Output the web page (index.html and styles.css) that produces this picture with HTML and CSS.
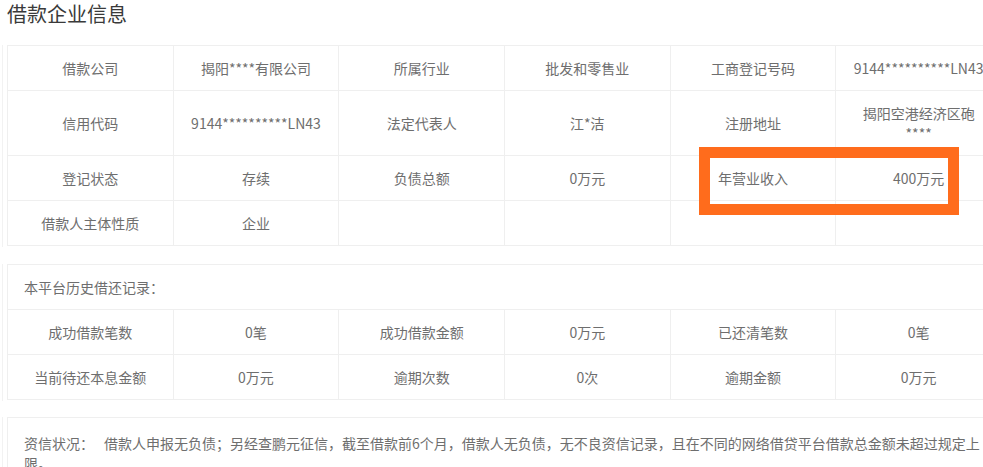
FILE: index.html
```html
<!DOCTYPE html>
<html lang="zh-CN">
<head>
<meta charset="utf-8">
<title>借款企业信息</title>
<link rel="stylesheet" href="styles.css">
</head>
<body>
<div class="page">
  <h2 class="title">借款企业信息</h2>

  <div class="panel">
    <table class="grid">
      <tr>
        <td>借款公司</td>
        <td>揭阳****有限公司</td>
        <td>所属行业</td>
        <td>批发和零售业</td>
        <td>工商登记号码</td>
        <td>9144**********LN43</td>
      </tr>
      <tr>
        <td>信用代码</td>
        <td>9144**********LN43</td>
        <td>法定代表人</td>
        <td>江*洁</td>
        <td>注册地址</td>
        <td>揭阳空港经济区砲<br>****</td>
      </tr>
      <tr>
        <td>登记状态</td>
        <td>存续</td>
        <td>负债总额</td>
        <td>0万元</td>
        <td>年营业收入</td>
        <td>400万元</td>
      </tr>
      <tr>
        <td>借款人主体性质</td>
        <td>企业</td>
        <td></td>
        <td></td>
        <td></td>
        <td></td>
      </tr>
    </table>
  </div>

  <div class="panel gap">
    <table class="grid">
      <tr>
        <td class="head" colspan="6">本平台历史借还记录：</td>
      </tr>
      <tr>
        <td>成功借款笔数</td>
        <td>0笔</td>
        <td>成功借款金额</td>
        <td>0万元</td>
        <td>已还清笔数</td>
        <td>0笔</td>
      </tr>
      <tr>
        <td>当前待还本息金额</td>
        <td>0万元</td>
        <td>逾期次数</td>
        <td>0次</td>
        <td>逾期金额</td>
        <td>0万元</td>
      </tr>
    </table>
  </div>

  <div class="panel gap2">
    <div class="note"><span class="note-label">资信状况：</span>借款人申报无负债；另经查鹏元征信，截至借款前6个月，借款人无负债，无不良资信记录，且在不同的网络借贷平台借款总金额未超过规定上限。</div>
  </div>

  <div class="highlight"></div>
</div>
</body>
</html>
```

FILE: styles.css
```css
html, body {
  margin: 0;
  padding: 0;
  background: #ffffff;
}

body {
  font-family: "Noto Sans CJK SC", "Noto Sans", sans-serif;
  font-size: 14px;
  color: #6e6e6e;
  overflow: hidden;
}

.page {
  position: relative;
  padding-left: 2px;
  padding-top: 1px;
  width: 1020px;
}

.title {
  margin: 0 0 19px 5px;
  font-size: 20px;
  line-height: 25px;
  font-weight: normal;
  color: #3a3a3a;
}

.panel {
  border-left: 1px solid #f2f2f2;
  padding-left: 4px;
  padding-bottom: 1px;
}

.gap {
  margin-top: 17px;
}

.gap2 {
  margin-top: 16px;
}

.grid {
  width: 995px;
  border-collapse: collapse;
  table-layout: fixed;
  border: 1px solid #efefef;
}

.grid td {
  border: 1px solid #efefef;
  padding: 12px 8px;
  line-height: 20px;
  text-align: center;
  vertical-align: middle;
  color: #6e6e6e;
}

.grid td.head {
  text-align: left;
  padding-left: 16px;
}

.note {
  width: 963px;
  border: 1px solid #efefef;
  padding: 15px 16px 8px 16px;
  line-height: 20px;
  color: #6e6e6e;
}

.note-label {
  margin-right: 10px;
}

.highlight {
  position: absolute;
  left: 699px;
  top: 147px;
  width: 238px;
  height: 46px;
  border: 11px solid #ff6c1c;
}
```
